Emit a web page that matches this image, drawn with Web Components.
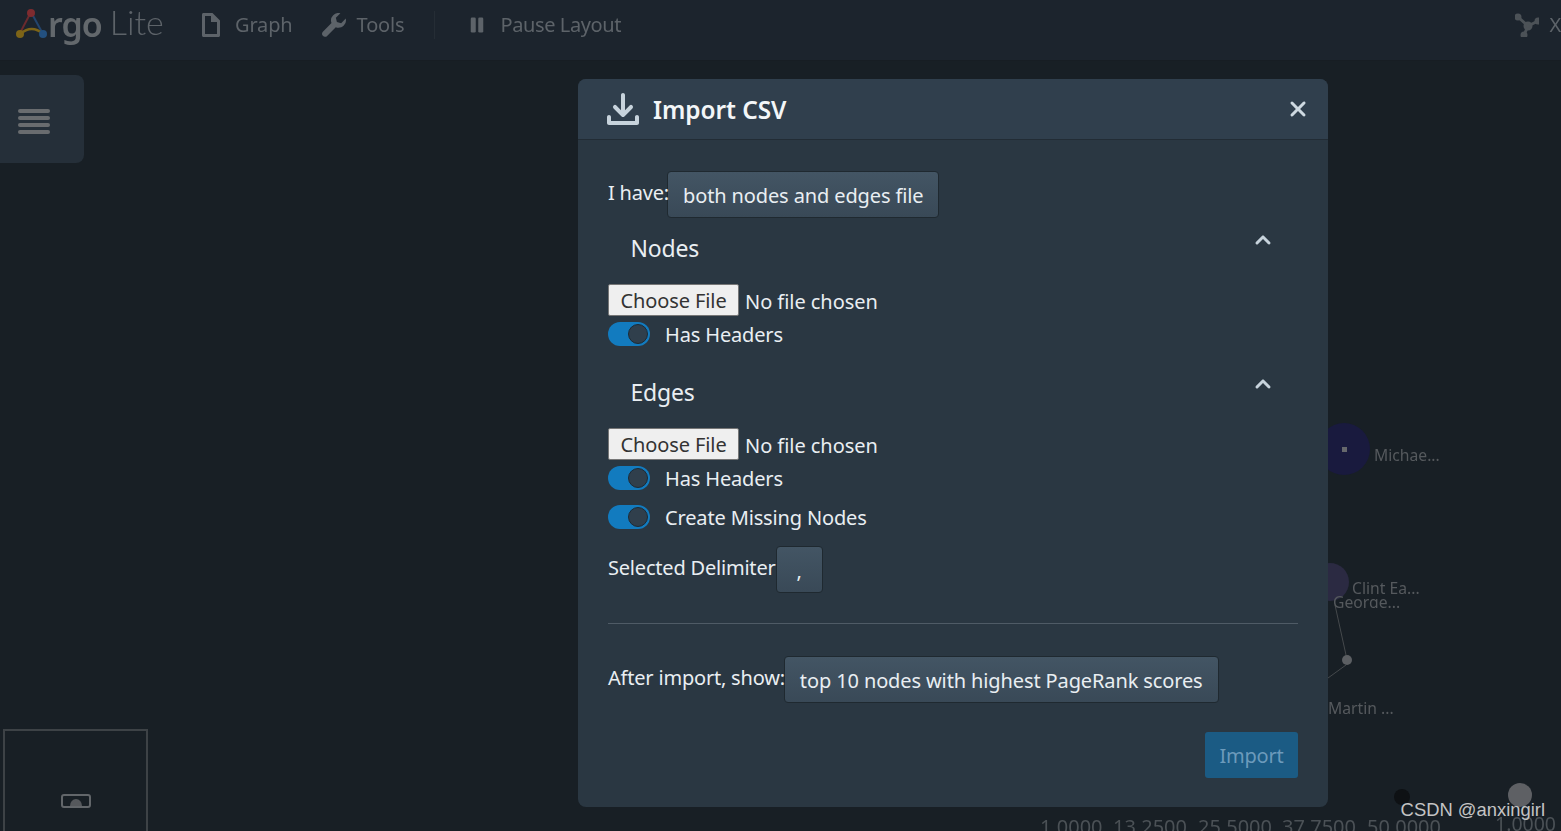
<!DOCTYPE html>
<html>
<head>
<meta charset="utf-8">
<title>Argo Lite</title>
<style>
  html, body { margin: 0; height: 100%; background: #181f25; overflow: hidden; }
  body { font-family: "Noto Sans", "Open Sans", sans-serif; }
</style>
</head>
<body>
<argo-app></argo-app>
<script>
const ICONS = {
  doc: '<path d="M9 0H3c-.55 0-1 .45-1 1v14c0 .55.45 1 1 1h10c.55 0 1-.45 1-1V5L9 0zm3 14H4V2h4v4h4v8z"/>',
  wrench: '<path d="M15.83 3.7l-3.06 3.05-2.84-.7-.7-2.83L12.29.17a5 5 0 00-4.83 1.29 4.97 4.97 0 00-1.12 5.26L.58 12.48c-.37.37-.58.87-.58 1.41 0 1.1.9 2 2 2 .55 0 1.05-.22 1.41-.59l5.77-5.77c1.79.69 3.91.33 5.35-1.12a4.99 4.99 0 001.3-4.71z"/>',
  pause: '<rect x="3" y="2" width="4" height="12" rx="1"/><rect x="9" y="2" width="4" height="12" rx="1"/>',
  imp: '<path d="M7.29 11.71c.18.18.43.29.71.29s.53-.11.71-.29l4-4a1.003 1.003 0 00-1.42-1.42L9 8.59V1c0-.55-.45-1-1-1S7 .45 7 1v7.59l-2.29-2.3a1.003 1.003 0 00-1.42 1.42l4 4zM15 11c-.55 0-1 .45-1 1v2H2v-2c0-.55-.45-1-1-1s-1 .45-1 1v3c0 .55.45 1 1 1h14c.55 0 1-.45 1-1v-3c0-.55-.45-1-1-1z"/>',
  cross: '<path d="M9.41 8l3.29-3.29c.19-.18.3-.43.3-.71a1.003 1.003 0 00-1.71-.71L8 6.59l-3.29-3.3a1.003 1.003 0 00-1.42 1.42L6.59 8 3.3 11.29c-.19.18-.3.43-.3.71a1.003 1.003 0 001.71.71L8 9.41l3.29 3.29c.18.19.43.3.71.3a1.003 1.003 0 00.71-1.71L9.41 8z"/>',
  chevron: '<path d="M12.71 9.29l-4-4C8.53 5.11 8.28 5 8 5s-.53.11-.71.29l-4 4a1.003 1.003 0 001.42 1.42L8 7.41l3.29 3.29c.18.19.43.3.71.3a1.003 1.003 0 00.71-1.71z"/>'
}

function icon(name, size) {
  return `<svg width="${size}" height="${size}" viewBox="0 0 16 16" fill="currentColor">${ICONS[name]}</svg>`
}

class ArgoNavbar extends HTMLElement {
  constructor() {
    super()
    this.attachShadow({ mode: "open" })
    this.shadowRoot.innerHTML = `
      <style>
        :host { display: flex; align-items: center; height: 61px; box-sizing: border-box; padding: 0 0 11px 15px;
          background: #1c242d; border-bottom: 1px solid #171d23; color: #5d6369; font-size: 20px; letter-spacing: -.15px; overflow: hidden; filter: blur(.4px); }
        .logo { display: flex; align-items: center; width: 175px; flex: none; }
        .logo b { font: 600 34px "Noto Sans", sans-serif; letter-spacing: -1px; color: #63686c; margin-left: -3px; position: relative; top: -1px; }
        .logo i { font: 300 34px Lato, sans-serif; letter-spacing: 0; color: #5d6369; margin-left: 8px; position: relative; top: -3px; }
        .item { display: flex; align-items: center; flex: none; }
        .item svg { display: block; }
        .graph { margin-left: 9px; gap: 12px; }
        .tools { margin-left: 29px; gap: 11px; }
        .sep { width: 1px; height: 28px; background: #252d35; margin-left: 30px; flex: none; }
        .pause { margin-left: 32px; gap: 13px; letter-spacing: -.4px; }
        .right { margin-left: auto; display: flex; align-items: center; gap: 10px; }
      </style>
      <div class="logo">
        <svg width="36" height="36" viewBox="0 0 36 36" fill="none" style="margin-top:-2px">
          <path d="M16 6 L5 27" stroke="#6a2a2e" stroke-width="2"/>
          <path d="M16 6 L28 28" stroke="#23456e" stroke-width="2"/>
          <path d="M5 28 Q17 18 28 28" stroke="#7d6417" stroke-width="2.4"/>
          <circle cx="16" cy="7" r="4" fill="#7e2b2f"/>
          <circle cx="5" cy="28" r="4" fill="#7d6417"/>
          <circle cx="28" cy="28" r="4" fill="#23507f"/>
        </svg>
        <b>rgo</b><i>Lite</i>
      </div>
      <div class="item graph">${icon("doc", 24)}<span>Graph</span></div>
      <div class="item tools">${icon("wrench", 24)}<span>Tools</span></div>
      <div class="sep"></div>
      <div class="item pause">${icon("pause", 20)}<span>Pause Layout</span></div>
      <div class="right">
        <svg width="24" height="24" viewBox="0 0 24 24" fill="#4c5257" stroke="#4c5257" stroke-width="3">
          <path d="M13 13 L3 4 M13 13 L23 8 M13 13 L9 22"/>
          <circle cx="3" cy="4" r="2"/><circle cx="23" cy="8" r="2"/><circle cx="9" cy="22" r="2"/><circle cx="13" cy="13" r="3"/>
        </svg>
        <span>X</span>
      </div>`
  }
}

class ArgoSidebarButton extends HTMLElement {
  constructor() {
    super()
    this.attachShadow({ mode: "open" })
    this.shadowRoot.innerHTML = `
      <style>
        :host { display: flex; flex-direction: column; justify-content: center; gap: 3px; box-sizing: border-box;
          width: 84px; height: 88px; padding: 5px 0 0 18px; margin-top: 14px; background: #252f39; border-radius: 0 8px 8px 0; }
        span { display: block; width: 32px; height: 4px; border-radius: 2px; background: #696c6f; }
      </style>
      <span></span><span></span><span></span><span></span>`
  }
}

// the dimmed graph behind the dialog, nodes sit where the layout put them
class GraphCanvas extends HTMLElement {
  constructor() {
    super()
    this.attachShadow({ mode: "open" })
    this.shadowRoot.innerHTML = `
      <style>
        :host { display: block; position: absolute; left: 0; top: 0; width: 1561px; height: 831px; overflow: hidden; filter: blur(.4px); }
        svg { position: absolute; left: 0; top: 0; }
        .label { position: absolute; font-size: 15.7px; line-height: 20px; color: #55595d; white-space: nowrap; }
        .axis { position: absolute; font-size: 20px; line-height: 24px; color: #4b5156; white-space: nowrap; }
        .mini { position: absolute; left: 3px; top: 729px; width: 141px; height: 120px; border: 2px solid #3d4246; }
        .clip { position: absolute; top: 595px; height: 13px; overflow: hidden; }
        .clip .label { position: static; display: block; line-height: 15px; }
      </style>
      <svg width="1561" height="831">
        <circle cx="1344" cy="449" r="26" fill="#191a3e"/>
        <rect x="1342" y="447" width="5" height="5" fill="#66686c"/>
        <circle cx="1330" cy="582" r="19" fill="#2b2a42"/>
        <path d="M1335 605 L1346 655 M1346 665 L1328 678" stroke="#45494c" stroke-width="1"/>
        <circle cx="1347" cy="660" r="5" fill="#5c5f63"/>
        <circle cx="1402" cy="797" r="8" fill="#0e1114"/>
        <circle cx="1520" cy="795" r="12" fill="#5e6064"/>
        <rect x="62" y="795" width="28" height="12" rx="2" fill="none" stroke="#62666a" stroke-width="2"/>
        <path d="M70 806 a6 7 0 0 1 12 0 z" fill="#55585c"/>
      </svg>
      <div class="mini"></div>
      <span class="label" style="left:1374px;top:445px">Michae...</span>
      <span class="label" style="left:1352px;top:578px">Clint Ea...</span>
      <div class="clip" style="left:1333px"><span class="label">George...</span></div>
      <span class="label" style="left:1328px;top:698px">Martin ...</span>
      <span class="axis" style="left:1040px;top:815px">1.0000</span>
      <span class="axis" style="left:1113px;top:815px">13.2500</span>
      <span class="axis" style="left:1198px;top:815px">25.5000</span>
      <span class="axis" style="left:1282px;top:815px">37.7500</span>
      <span class="axis" style="left:1367px;top:815px">50.0000</span>
      <span class="axis" style="left:1495px;top:812px;font-size:19.5px">1.0000</span>`
  }
}

class SelectButton extends HTMLElement {
  constructor() {
    super()
    this.attachShadow({ mode: "open" })
    this.shadowRoot.innerHTML = `
      <style>
        :host { display: inline-flex; align-items: center; justify-content: center; box-sizing: border-box; height: 47px; min-width: 47px;
          padding: 1px 15px 0; flex: none; color: #e9eef2; font-size: 20px; letter-spacing: -.12px;
          background: linear-gradient(#435564, #394957); border: 1px solid #1f2930; border-radius: 4px; }
      </style>
      <slot></slot>`
  }
}

class FileRow extends HTMLElement {
  constructor() {
    super()
    this.attachShadow({ mode: "open" })
    this.shadowRoot.innerHTML = `
      <style>
        :host { display: flex; align-items: center; height: 32px; gap: 6px; font-size: 20px; letter-spacing: -.05px; color: #e9eef2; }
        button { box-sizing: border-box; width: 131px; height: 32px; padding: 0; font: inherit; letter-spacing: -.1px; color: #333;
          background: #efefef; border: 1px solid #767676; border-radius: 2px; }
        span { position: relative; top: 1px; }
      </style>
      <button>Choose File</button><span>No file chosen</span>`
  }
}

class ToggleRow extends HTMLElement {
  constructor() {
    super()
    this.attachShadow({ mode: "open" })
    this.shadowRoot.innerHTML = `
      <style>
        :host { display: flex; align-items: center; height: 24px; gap: 15px; font-size: 20px; letter-spacing: -.15px; color: #e9eef2; }
        .track { display: flex; justify-content: flex-end; align-items: center; box-sizing: border-box; width: 42px; height: 24px;
          padding-right: 2px; border-radius: 12px; background: #127bbf; flex: none; }
        .knob { box-sizing: border-box; width: 20px; height: 20px; border-radius: 50%; background: #303f4c; border: 1px solid #1d2a35; }
      </style>
      <div class="track"><div class="knob"></div></div><span><slot></slot></span>`
  }
}

class SectionHead extends HTMLElement {
  constructor() {
    super()
    this.attachShadow({ mode: "open" })
    this.shadowRoot.innerHTML = `
      <style>
        :host { display: flex; height: 66px; box-sizing: border-box; padding: 10px 23px 0 22.5px; justify-content: space-between;
          font-size: 23px; color: #e9eef2; }
        .name { line-height: 40px; }
        svg { color: #c7d3dc; }
      </style>
      <div class="name"><slot></slot></div>${icon("chevron", 24)}`
  }
}

class ImportDialog extends HTMLElement {
  constructor() {
    super()
    this.attachShadow({ mode: "open" })
    this.shadowRoot.innerHTML = `
      <style>
        :host { display: block; position: absolute; left: 578px; top: 79px; width: 750px; box-sizing: border-box;
          background: #2a3742; border-radius: 8px; color: #e9eef2; font-size: 20px; letter-spacing: -.2px; }
        header { display: flex; align-items: center; height: 61px; box-sizing: border-box; padding: 0 18px 0 29px;
          background: #303f4d; border-bottom: 1px solid #222c35; border-radius: 8px 8px 0 0; }
        header svg { display: block; flex: none; }
        .imp { color: #c7d3dc; }
        h1 { margin: 0 0 0 14px; font-size: 24.4px; font-weight: 600; letter-spacing: -.05px; color: #f3f6f8; flex: 1; }
        .cross { color: #ced9e1; }
        main { padding: 31px 30px 29px; }
        .line { display: flex; align-items: center; }
        .line > span { position: relative; top: -2px; }
        .tight > span { margin-right: -2px; }
        .tight1 > span { margin-right: -1px; }
        hr { height: 1px; border: 0; background: #4f5b66; margin: 30px 0 32px; }
        .gap15 { margin-top: 6px; }
        .last { margin-top: 15px; }
        .delim { margin-top: 17px; }
        .next { margin-top: 16px; }
        footer { display: flex; justify-content: flex-end; margin-top: 29px; }
        .import { box-sizing: border-box; width: 93px; height: 46px; padding: 0; font: inherit; letter-spacing: -.2px; color: #6c9abb;
          background: #1b5b84; border: 0; border-radius: 3px; }
      </style>
      <header>
        <span class="imp">${icon("imp", 32)}</span>
        <h1>Import CSV</h1>
        <span class="cross">${icon("cross", 24)}</span>
      </header>
      <main>
        <div class="line tight"><span>I have:</span><select-button>both nodes and edges file</select-button></div>
        <section-head>Nodes</section-head>
        <file-row></file-row>
        <toggle-row class="gap15">Has Headers</toggle-row>
        <section-head class="next">Edges</section-head>
        <file-row></file-row>
        <toggle-row class="gap15">Has Headers</toggle-row>
        <toggle-row class="last">Create Missing Nodes</toggle-row>
        <div class="line delim"><span>Selected Delimiter</span><select-button>,</select-button></div>
        <hr>
        <div class="line tight1"><span>After import, show:</span><select-button>top 10 nodes with highest PageRank scores</select-button></div>
        <footer><button class="import">Import</button></footer>
      </main>`
  }
}

class WaterMark extends HTMLElement {
  constructor() {
    super()
    this.attachShadow({ mode: "open" })
    this.shadowRoot.innerHTML = `
      <style>
        :host { display: block; position: absolute; right: 16px; top: 798px; font: 18.4px/24px "Liberation Sans", sans-serif; color: #c4c4c4; }
      </style>
      <slot></slot>`
  }
}

class ArgoApp extends HTMLElement {
  constructor() {
    super()
    this.attachShadow({ mode: "open" })
    this.shadowRoot.innerHTML = `
      <style>
        :host { display: block; position: relative; width: 1561px; height: 831px; overflow: hidden; background: #181f25; }
        argo-navbar { position: relative; }
      </style>
      <graph-canvas></graph-canvas>
      <argo-navbar></argo-navbar>
      <argo-sidebar-button></argo-sidebar-button>
      <import-dialog></import-dialog>
      <water-mark>CSDN @anxingirl</water-mark>`
  }
}

customElements.define("argo-navbar", ArgoNavbar)
customElements.define("argo-sidebar-button", ArgoSidebarButton)
customElements.define("graph-canvas", GraphCanvas)
customElements.define("select-button", SelectButton)
customElements.define("file-row", FileRow)
customElements.define("toggle-row", ToggleRow)
customElements.define("section-head", SectionHead)
customElements.define("import-dialog", ImportDialog)
customElements.define("water-mark", WaterMark)
customElements.define("argo-app", ArgoApp)
</script>
</body>
</html>
